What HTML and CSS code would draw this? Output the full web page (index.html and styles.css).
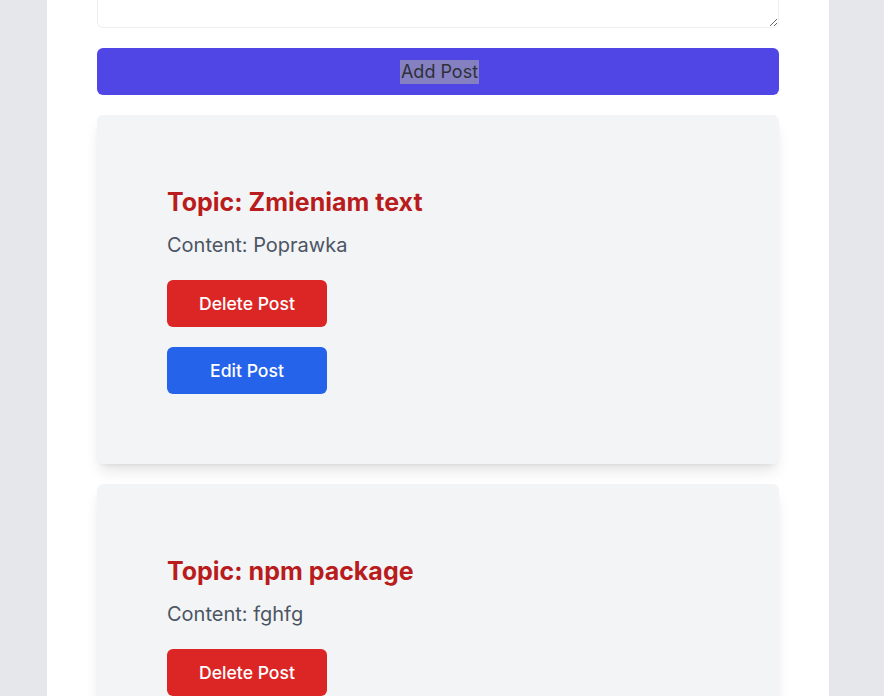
FILE: index.html
```html
<!DOCTYPE html>
<html>
<head>
<meta charset="utf-8">
<link rel="stylesheet" href="styles.css">
</head>
<body>
<div class="page">
  <main class="container">
    <form class="form">
      <textarea class="textarea"></textarea>
      <button type="button" class="add-btn"><span class="add-label">Add Post</span></button>
    </form>
    <section class="posts">
      <article class="card">
        <h2 class="topic">Topic: Zmieniam text</h2>
        <p class="content">Content: Poprawka</p>
        <div class="actions">
          <button type="button" class="btn btn-delete">Delete Post</button>
          <button type="button" class="btn btn-edit">Edit Post</button>
        </div>
      </article>
      <article class="card">
        <h2 class="topic">Topic: npm package</h2>
        <p class="content">Content: fghfg</p>
        <div class="actions">
          <button type="button" class="btn btn-delete">Delete Post</button>
          <button type="button" class="btn btn-edit">Edit Post</button>
        </div>
      </article>
    </section>
  </main>
</div>
</body>
</html>
```

FILE: styles.css
```css
* { box-sizing: border-box; }
html, body { margin: 0; padding: 0; }
body {
  background: #e5e7eb;
  font-family: Inter, "Noto Sans", sans-serif;
}
.page {
  display: flex;
  justify-content: flex-start;
  padding-left: 47px;
}
.container {
  width: 782px;
  background: #ffffff;
  padding: 0 50px 200px;
  margin-top: -72px;
}
.form {
  display: flex;
  flex-direction: column;
  gap: 20px;
}
.textarea {
  display: block;
  width: 100%;
  height: 100px;
  border: 1px solid #eeeff1;
  border-radius: 6px;
  background: #fff;
  resize: vertical;
  font-family: inherit;
}
.add-btn {
  height: 47px;
  border: none;
  border-radius: 6px;
  background: #4f46e5;
  display: flex;
  align-items: center;
  justify-content: center;
  padding: 0;
  font-family: inherit;
}
.add-label {
  background: #8480c2;
  color: #2f2f3a;
  font-size: 18px;
  line-height: 24px;
  padding: 0 1px;
  margin-left: 3px;
}
.posts {
  display: flex;
  flex-direction: column;
  gap: 20px;
  margin-top: 20px;
}
.card {
  background: #f3f4f6;
  border-radius: 6px;
  padding: 70px;
  box-shadow: 0 10px 15px -3px rgba(0,0,0,0.1), 0 4px 6px -4px rgba(0,0,0,0.1);
}
.topic {
  margin: 0;
  color: #b91c1c;
  font-size: 25px;
  line-height: 34px;
  font-weight: 700;
}
.content {
  margin: 12px 0 0;
  color: #4b5563;
  font-size: 20px;
  line-height: 28px;
}
.actions {
  margin-top: 21px;
  display: flex;
  flex-direction: column;
  align-items: flex-start;
  gap: 20px;
}
.btn {
  width: 160px;
  height: 47px;
  border: none;
  border-radius: 6px;
  color: #ffffff;
  font-family: inherit;
  font-size: 17.6px;
  font-weight: 500;
  padding: 0;
}
.btn-delete { background: #dc2626; }
.btn-edit { background: #2563eb; }
```
